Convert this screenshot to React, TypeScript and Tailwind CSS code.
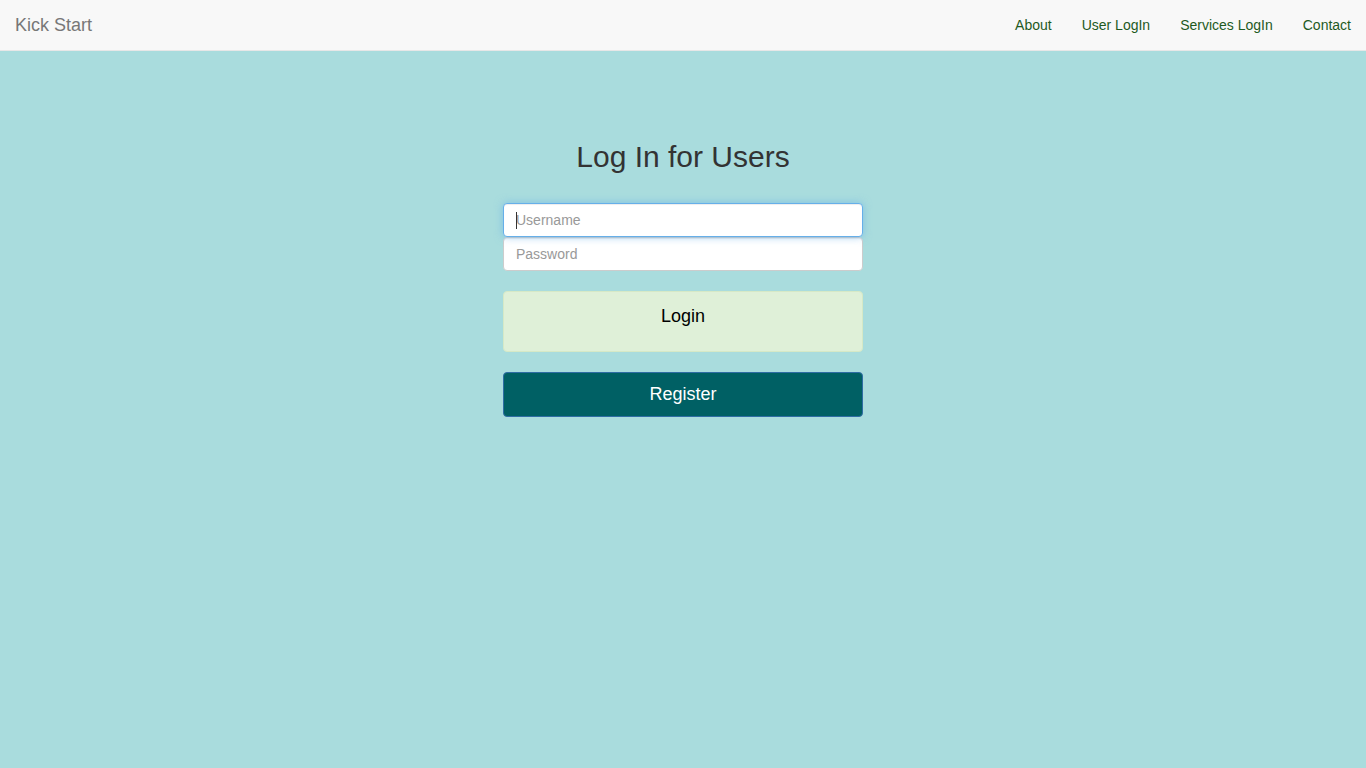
import React from "react";

export default function App() {
  const font = { fontFamily: '"Liberation Sans", Arial, sans-serif' };
  return (
    <div style={font} className="min-h-[768px] w-full bg-[#a9dcdd] flex flex-col">
      <nav className="h-[51px] bg-[#f8f8f8] border-b border-[#e7e7e7] flex items-center justify-between">
        <a className="px-[15px] text-[18px] leading-[20px] text-[#777]">Kick Start</a>
        <ul className="flex items-center">
          {["About", "User LogIn", "Services LogIn", "Contact"].map((l) => (
            <li key={l} className="px-[15px] text-[14px] leading-[20px] text-[#1e5a1e]">
              {l}
            </li>
          ))}
        </ul>
      </nav>
      <div className="flex flex-col items-center pt-[89px]">
        <h2 className="text-[30px] leading-[33px] text-[#333] font-normal">Log In for Users</h2>
        <div className="w-[360px] mt-[30px] flex flex-col">
          <div className="relative">
            <input
              className="w-full h-[34px] px-[12px] text-[14px] bg-white border border-[#66afe9] rounded-[4px] outline-none shadow-[inset_0_1px_1px_rgba(0,0,0,0.075),0_0_8px_rgba(102,175,233,0.6)] placeholder:text-[#999]"
              placeholder="Username"
              readOnly
            />
            <span className="absolute left-[13px] top-[9px] w-px h-[17px] bg-[#333]" />
          </div>
          <input
            className="w-full h-[34px] px-[12px] text-[14px] bg-white border border-[#ccc] rounded-[4px] outline-none shadow-[inset_0_1px_1px_rgba(0,0,0,0.075)] placeholder:text-[#999]"
            placeholder="Password"
            readOnly
          />
          <button className="mt-[20px] h-[61px] w-full bg-[#dff0d8] border border-[#d6e9c6] rounded-[4px] text-[18px] leading-[24px] text-black flex justify-center pt-[12px]">
            Login
          </button>
          <button className="mt-[20px] h-[45px] w-full bg-[#006064] border border-[#2e6da4] rounded-[4px] text-[18px] leading-[24px] text-white flex items-center justify-center pb-[2px]">
            Register
          </button>
        </div>
      </div>
    </div>
  );
}
